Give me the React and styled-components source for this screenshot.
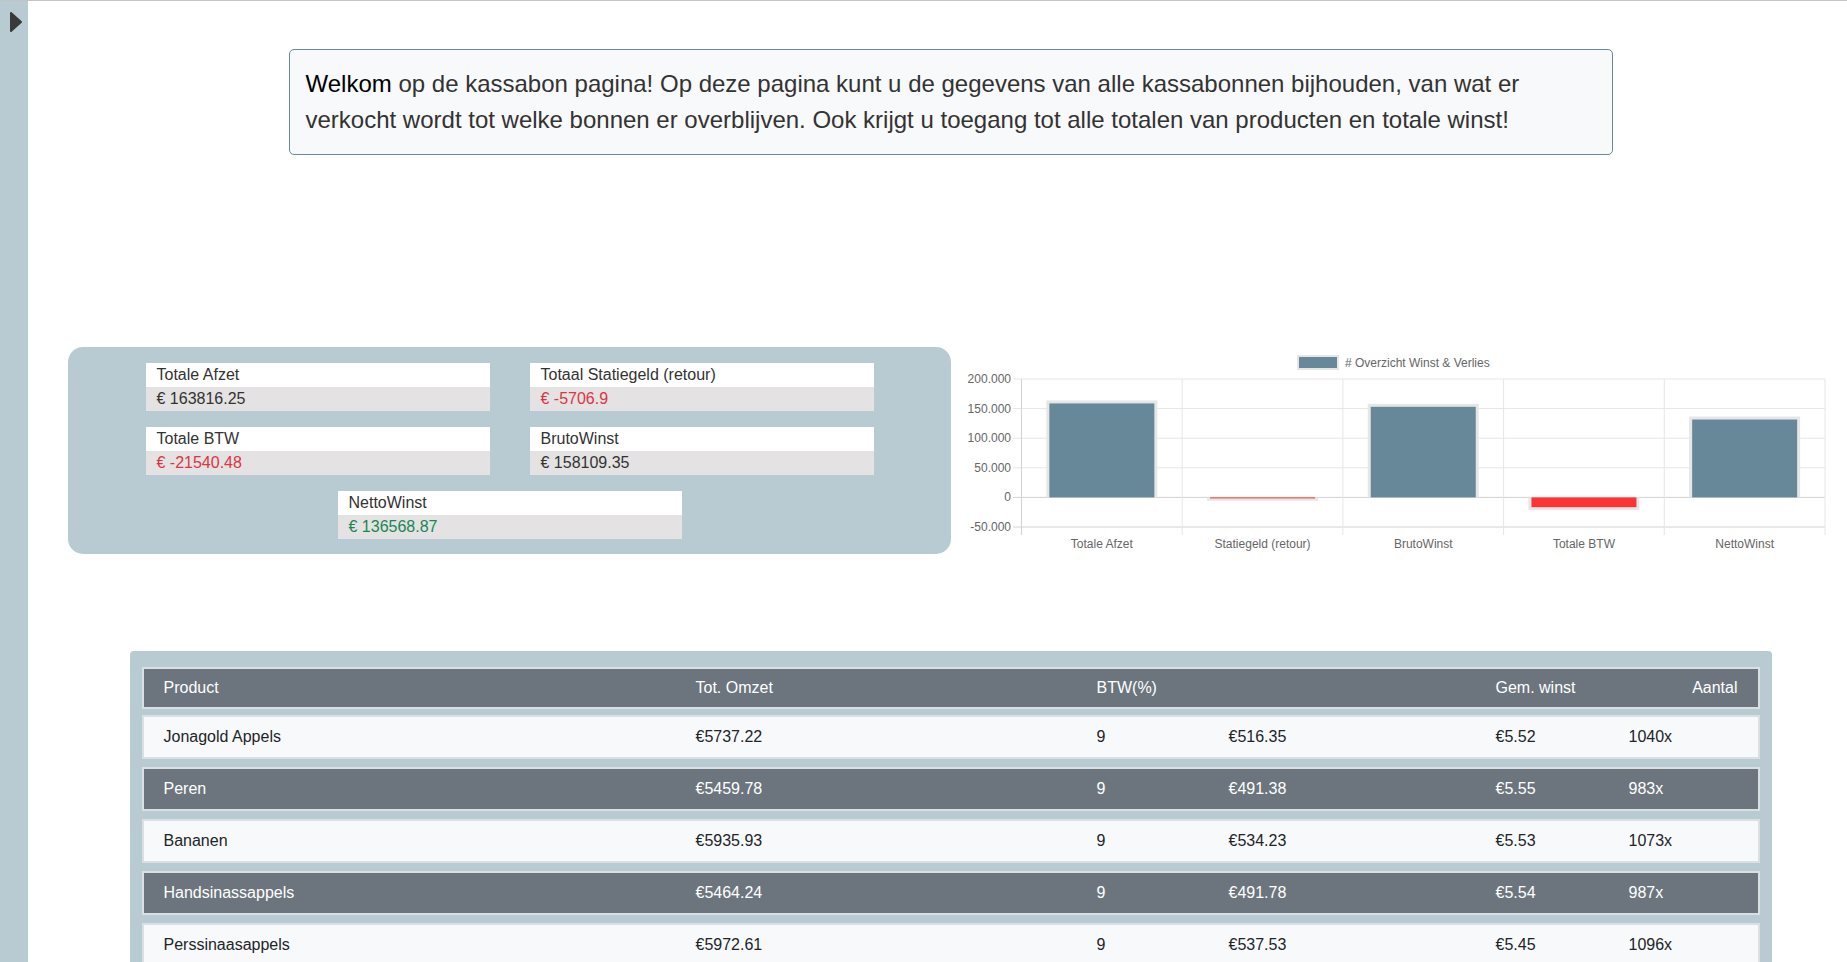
import React from 'react';
import styled, { createGlobalStyle } from 'styled-components';

const GlobalStyle = createGlobalStyle`
  html, body {
    margin: 0;
    padding: 0;
    background: #fff;
    font-family: "Liberation Sans", Arial, sans-serif;
    color: #333;
  }
`;

const Page = styled.div`
  display: flex;
  min-height: 100vh;
  border-top: 1px solid #c4c4c4;
`;

const Sidebar = styled.aside`
  width: 28px;
  flex-shrink: 0;
  background: #b9cbd2;
  padding-top: 10px;
  box-sizing: border-box;
  svg {
    display: block;
    margin-left: 9px;
  }
`;

const Main = styled.main`
  flex: 1;
  padding-left: 26px;
  box-sizing: border-box;
`;

const Welcome = styled.div`
  width: 1324px;
  box-sizing: border-box;
  margin: 48px auto 0;
  padding: 16px;
  border: 1px solid #6a8896;
  border-radius: 5px;
  background: #f8f9fa;
  font-size: 24px;
  line-height: 36px;
  color: #333;

  b {
    font-weight: 400;
    color: #000;
  }
`;

const StatsRow = styled.div`
  display: grid;
  grid-template-columns: 883px 880px;
  column-gap: 10px;
  align-items: start;
  margin: 192px 0 0 14px;
`;

const StatsPanel = styled.div`
  display: grid;
  grid-template-columns: 344px 344px;
  justify-content: center;
  gap: 16px 40px;
  padding: 16px 0 15px;
  border-radius: 15px;
  background: #b9cbd2;
`;

const StatCard = styled.div`
  font-size: 16px;
  line-height: 24px;
  grid-column: ${p => (p.wide ? '1 / span 2' : 'auto')};
  justify-self: ${p => (p.wide ? 'center' : 'stretch')};
  width: 344px;
`;

const StatTitle = styled.div`
  background: #fff;
  padding: 0 11px;
  color: #333;
`;

const tones = { danger: '#dc3545', success: '#198754', plain: '#333' };

const StatValue = styled.div`
  background: #e4e2e2;
  padding: 0 11px;
  color: ${p => tones[p.tone] || tones.plain};
`;

const ChartSvg = styled.svg`
  display: block;
  font-family: "Liberation Sans", Arial, sans-serif;
`;

const TablePanel = styled.section`
  width: 1642px;
  box-sizing: border-box;
  margin: 97px auto 0;
  padding: 16px 12px 20px;
  border-radius: 4px;
  background: #b9cbd2;
  display: flex;
  flex-direction: column;
  gap: 8px;
`;

const Row = styled.div`
  display: grid;
  grid-template-columns: 532px 401px 132px 267px 133px 1fr;
  align-items: center;
  height: ${p => (p.header ? '42px' : '44px')};
  margin-bottom: ${p => (p.header ? '-2px' : '0')};
  box-sizing: border-box;
  padding: 0 20px;
  border: 2px solid #dadfe3;
  background: ${p => (p.dark ? '#6c757d' : '#f8f9fa')};
  color: ${p => (p.dark ? '#fff' : '#212529')};
  font-size: 16px;
`;

const Cell = styled.div`
  white-space: nowrap;
  text-align: ${p => (p.right ? 'right' : 'left')};
`;

const stats = [
  { title: 'Totale Afzet', value: '€ 163816.25' },
  { title: 'Totaal Statiegeld (retour)', value: '€ -5706.9', tone: 'danger' },
  { title: 'Totale BTW', value: '€ -21540.48', tone: 'danger' },
  { title: 'BrutoWinst', value: '€ 158109.35' },
  { title: 'NettoWinst', value: '€ 136568.87', tone: 'success', wide: true },
];

const bars = [
  { label: 'Totale Afzet', value: 163816.25 },
  { label: 'Statiegeld (retour)', value: -5706.9 },
  { label: 'BrutoWinst', value: 158109.35 },
  { label: 'Totale BTW', value: -21540.48 },
  { label: 'NettoWinst', value: 136568.87 },
];

const products = [
  ['Jonagold Appels', '€5737.22', '9', '€516.35', '€5.52', '1040x'],
  ['Peren', '€5459.78', '9', '€491.38', '€5.55', '983x'],
  ['Bananen', '€5935.93', '9', '€534.23', '€5.53', '1073x'],
  ['Handsinassappels', '€5464.24', '9', '€491.78', '€5.54', '987x'],
  ['Perssinaasappels', '€5972.61', '9', '€537.53', '€5.45', '1096x'],
];

const ToggleIcon = () => (
  <svg width="14" height="22" viewBox="0 0 14 22">
    <path d="M2 2 L12 11 L2 20 Z" fill="#3a3a3a" stroke="#3a3a3a" strokeWidth="2" strokeLinejoin="round" />
  </svg>
);

// chart geometry, in px inside the svg
const left = 60.5;
const right = 864;
const top = 32;
const bottom = 180;
const yFor = v => top + ((200000 - v) * (bottom - top)) / 250000;
const ticks = [200000, 150000, 100000, 50000, 0, -50000];
const fmt = v => (v === 0 ? '0' : v.toLocaleString('de-DE'));

const BarChart = () => {
  const cat = (right - left) / bars.length;
  const zero = yFor(0);
  const bw = 111;
  return (
    <ChartSvg width="880" height="207" viewBox="0 0 880 207">
      <rect x="337" y="9" width="40" height="13" fill="#668899" stroke="#e6e6e6" strokeWidth="2" />
      <text x="384" y="20" fontSize="12" fill="#666">
        # Overzicht Winst &amp; Verlies
      </text>

      {ticks.map(t => (
        <g key={t}>
          <line x1="52" x2={right} y1={yFor(t)} y2={yFor(t)} stroke={t === 0 || t === -50000 ? '#d2d2d2' : '#e6e6e6'} />
          <text x="50" y={yFor(t) + 4} fontSize="12" fill="#666" textAnchor="end">
            {fmt(t)}
          </text>
        </g>
      ))}

      {bars.map((b, i) => (
        <line key={i} x1={left + i * cat} x2={left + i * cat} y1={top} y2={bottom + 8} stroke={i === 0 ? '#d2d2d2' : '#e6e6e6'} />
      ))}
      <line x1={right} x2={right} y1={top} y2={bottom + 8} stroke="#e6e6e6" />

      {bars.map((b, i) => {
        const cx = left + cat * i + cat / 2;
        const y = yFor(b.value);
        const y0 = Math.min(y, zero);
        const h = Math.abs(y - zero);
        const neg = b.value < 0;
        return (
          <g key={b.label}>
            <rect x={cx - bw / 2} y={y0} width={bw} height={Math.max(h, 1)} fill="#e6e6e6" />
            <rect
              x={cx - bw / 2 + 3}
              y={neg ? zero : y0 + 3}
              width={bw - 6}
              height={Math.max(h - 3, 1)}
              fill={neg ? '#ff3333' : '#668899'}
            />
            <text x={cx} y="201" fontSize="12" fill="#666" textAnchor="middle">
              {b.label}
            </text>
          </g>
        );
      })}
    </ChartSvg>
  );
};

const App = () => (
  <>
    <GlobalStyle />
    <Page>
      <Sidebar>
        <ToggleIcon />
      </Sidebar>
      <Main>
        <Welcome>
          <b>Welkom</b> op de kassabon pagina! Op deze pagina kunt u de gegevens van alle kassabonnen bijhouden, van wat er
          verkocht wordt tot welke bonnen er overblijven. Ook krijgt u toegang tot alle totalen van producten en totale winst!
        </Welcome>

        <StatsRow>
          <StatsPanel>
            {stats.map(s => (
              <StatCard key={s.title} wide={s.wide}>
                <StatTitle>{s.title}</StatTitle>
                <StatValue tone={s.tone}>{s.value}</StatValue>
              </StatCard>
            ))}
          </StatsPanel>
          <BarChart />
        </StatsRow>

        <TablePanel>
          <Row header dark>
            <Cell>Product</Cell>
            <Cell>Tot. Omzet</Cell>
            <Cell>BTW(%)</Cell>
            <Cell />
            <Cell>Gem. winst</Cell>
            <Cell right>Aantal</Cell>
          </Row>
          {products.map((p, i) => (
            <Row key={p[0]} dark={i % 2 === 1}>
              {p.map((c, j) => (
                <Cell key={j}>{c}</Cell>
              ))}
            </Row>
          ))}
        </TablePanel>
      </Main>
    </Page>
  </>
);

export default App;
